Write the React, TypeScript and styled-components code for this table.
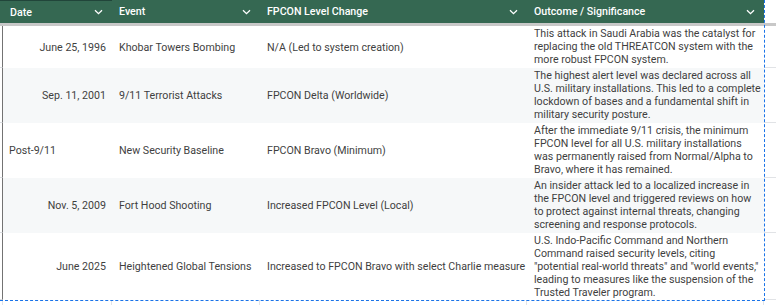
import styled, { createGlobalStyle } from "styled-components";

const GlobalStyle = createGlobalStyle`
  html, body {
    margin: 0;
    padding: 0;
    background: #ffffff;
  }
`;

const Sheet = styled.div`
  position: relative;
  display: grid;
  grid-template-columns: 3px 109px 148px 267px 237px 12px;
  grid-template-rows: 23px 3px 42px 55px 55px 55px 67px 5px;
  width: 776px;
  height: 305px;
  overflow: hidden;
  font-family: Roboto, "Liberation Sans", sans-serif;
  font-size: 10.65px;
  color: #3f3f3f;
  background: #ffffff;
`;

const HeadGutter = styled.div`
  background: #356852;
  border-top: 1px solid #21453a;
`;

const HeadCell = styled.div<{ $dark?: boolean }>`
  display: flex;
  align-items: center;
  justify-content: space-between;
  padding: 0 9px 0 7px;
  background: #356852;
  color: #ffffff;
  font-weight: 500;
  ${(p) => (p.$dark ? "border-top: 1px solid #21453a;" : "")}
`;

const HeadBlank = styled.div`
  background: #ffffff;
`;

const FreezeBand = styled.div`
  grid-column: 1 / -1;
  background: #c8c8c8;
`;

const Gutter = styled.div`
  border-right: 1px solid #737373;
  border-bottom: 1px solid #dadce0;
`;

const Cell = styled.div<{ $alt: boolean; $align?: "left" | "right" }>`
  display: flex;
  align-items: center;
  justify-content: ${(p) => (p.$align === "right" ? "flex-end" : "flex-start")};
  padding: 0 4px 0 7px;
  background: ${(p) => (p.$alt ? "#f6f8f9" : "#ffffff")};
  white-space: nowrap;
  overflow: hidden;
  line-height: 13px;
`;

const DateCell = styled(Cell)`
  padding: 0 6px 0 6px;
`;

const OutcomeCell = styled.div<{ $alt: boolean }>`
  padding: 1px 2px 0 7px;
  background: ${(p) => (p.$alt ? "#f6f8f9" : "#ffffff")};
  line-height: 13px;
  overflow: hidden;
`;

const Blank = styled.div`
  border-bottom: 1px solid #e1e3e6;
`;

const Foot = styled.div`
  border-right: 1px solid #e1e3e6;
`;

const Selection = styled.div`
  position: absolute;
  left: 0;
  top: 0;
  width: 764px;
  height: 300px;
  border-right: 1px dashed #1a73e8;
  border-bottom: 1px dashed #1a73e8;
  pointer-events: none;
`;

const Chevron = () => (
  <svg width="9" height="6" viewBox="0 0 9 6" fill="none">
    <path d="M1 1.2l3.5 3.5L8 1.2" stroke="#ffffff" strokeWidth="1.3" />
  </svg>
);

type Row = {
  date: string;
  right: boolean;
  event: string;
  level: string;
  outcome: string;
};

const rows: Row[] = [
  {
    date: "June 25, 1996",
    right: true,
    event: "Khobar Towers Bombing",
    level: "N/A (Led to system creation)",
    outcome:
      "This attack in Saudi Arabia was the catalyst for replacing the old THREATCON system with the more robust FPCON system.",
  },
  {
    date: "Sep. 11, 2001",
    right: true,
    event: "9/11 Terrorist Attacks",
    level: "FPCON Delta (Worldwide)",
    outcome:
      "The highest alert level was declared across all U.S. military installations. This led to a complete lockdown of bases and a fundamental shift in military security posture.",
  },
  {
    date: "Post-9/11",
    right: false,
    event: "New Security Baseline",
    level: "FPCON Bravo (Minimum)",
    outcome:
      "After the immediate 9/11 crisis, the minimum FPCON level for all U.S. military installations was permanently raised from Normal/Alpha to Bravo, where it has remained.",
  },
  {
    date: "Nov. 5, 2009",
    right: true,
    event: "Fort Hood Shooting",
    level: "Increased FPCON Level (Local)",
    outcome:
      "An insider attack led to a localized increase in the FPCON level and triggered reviews on how to protect against internal threats, changing screening and response protocols.",
  },
  {
    date: "June 2025",
    right: true,
    event: "Heightened Global Tensions",
    level: "Increased to FPCON Bravo with select Charlie measure",
    outcome:
      'U.S. Indo-Pacific Command and Northern Command raised security levels, citing "potential real-world threats" and "world events," leading to measures like the suspension of the Trusted Traveler program.',
  },
];

const headers = ["Date", "Event", "FPCON Level Change", "Outcome / Significance"];

export default function App() {
  return (
    <>
      <GlobalStyle />
      <Sheet>
        <HeadGutter />
        {headers.map((h, i) => (
          <HeadCell key={h} $dark={i === 0}>
            <span>{h}</span>
            <Chevron />
          </HeadCell>
        ))}
        <HeadBlank />
        <FreezeBand />
        {rows.map((r, i) => {
          const alt = i % 2 === 1;
          return [
            <Gutter key={`g${i}`} />,
            <DateCell key={`d${i}`} $alt={alt} $align={r.right ? "right" : "left"}>
              {r.date}
            </DateCell>,
            <Cell key={`e${i}`} $alt={alt}>
              {r.event}
            </Cell>,
            <Cell key={`l${i}`} $alt={alt}>
              {r.level}
            </Cell>,
            <OutcomeCell key={`o${i}`} $alt={alt}>
              {r.outcome}
            </OutcomeCell>,
            <Blank key={`b${i}`} />,
          ];
        })}
        <Foot />
        <Foot />
        <Foot />
        <Foot />
        <Foot />
        <div />
        <Selection />
      </Sheet>
    </>
  );
}
